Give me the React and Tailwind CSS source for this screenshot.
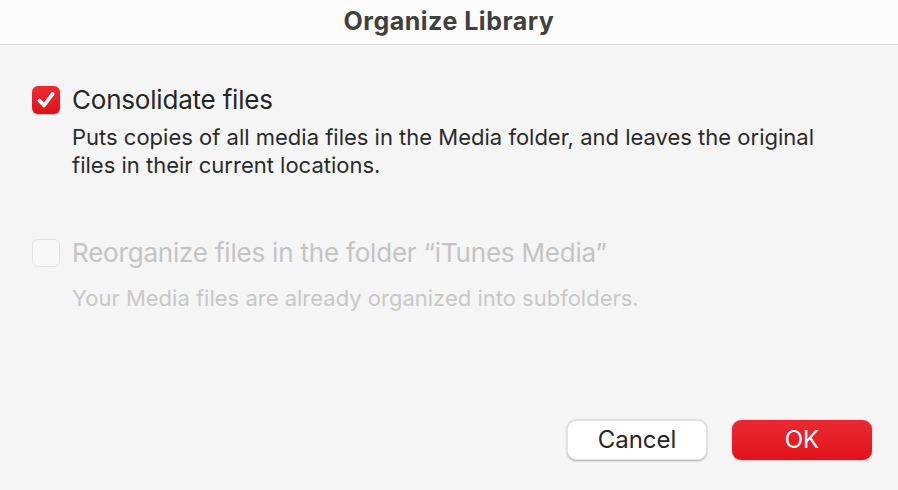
import React from "react";

function Check({ checked, disabled }) {
  if (checked) {
    return (
      <div className="w-[28px] h-[28px] rounded-[6px] bg-gradient-to-b from-[#ee2b33] to-[#dc1019] shadow-[0_0.5px_1px_rgba(0,0,0,0.25)] flex items-center justify-center shrink-0">
        <svg width="22" height="22" viewBox="0 0 20 20">
          <path d="M4 10.5 L8.2 15 L16 4.5" fill="none" stroke="white" strokeWidth="3.4" strokeLinecap="round" strokeLinejoin="round" />
        </svg>
      </div>
    );
  }
  return (
    <div className={"w-[28px] h-[28px] rounded-[6px] shrink-0 border " + (disabled ? "border-[#e2e2e2] bg-[#f8f8f8]" : "border-[#c8c8c8] bg-white")}></div>
  );
}

export default function App() {
  return (
    <div className="w-[898px] h-[490px] bg-[#f5f5f5] flex flex-col font-['Inter',sans-serif] text-[#262626]">
      <div className="h-[45px] bg-[#fcfcfc] border-b border-[#d9d9d9] flex items-center justify-center shrink-0">
        <h1 className="text-[25px] font-bold text-[#404040] tracking-[0.5px]">Organize Library</h1>
      </div>

      <div className="flex-1 flex flex-col px-[32px]">
        <div className="mt-[40px] flex items-center gap-[12px]">
          <Check checked />
          <span className="text-[26px] leading-[30px] tracking-[-0.2px]">Consolidate files</span>
        </div>
        <p className="ml-[40px] mt-[8px] text-[22px] leading-[28px] text-[#2a2a2a]">
          Puts copies of all media files in the Media folder, and leaves the original
          <br />
          files in their current locations.
        </p>

        <div className="mt-[59px] flex items-center gap-[12px]">
          <Check disabled />
          <span className="text-[26px] leading-[30px] tracking-[-0.2px] text-[#c4c4c4]">Reorganize files in the folder “iTunes Media”</span>
        </div>
        <p className="ml-[40px] mt-[16px] text-[22px] leading-[28px] text-[#c8c8c8]">
          Your Media files are already organized into subfolders.
        </p>

        <div className="mt-auto mb-[30px] flex justify-end gap-[25px] -mr-[6px]">
          <button className="w-[140px] h-[40px] rounded-[9px] bg-white text-[24px] text-[#262626] shadow-[0_0.5px_2px_rgba(0,0,0,0.3)] border border-[#e2e2e2]">
            Cancel
          </button>
          <button className="w-[140px] h-[40px] rounded-[9px] bg-gradient-to-b from-[#ec2932] to-[#e0111a] text-[24px] text-white shadow-[0_0.5px_2px_rgba(0,0,0,0.2)]">
            OK
          </button>
        </div>
      </div>
    </div>
  );
}
